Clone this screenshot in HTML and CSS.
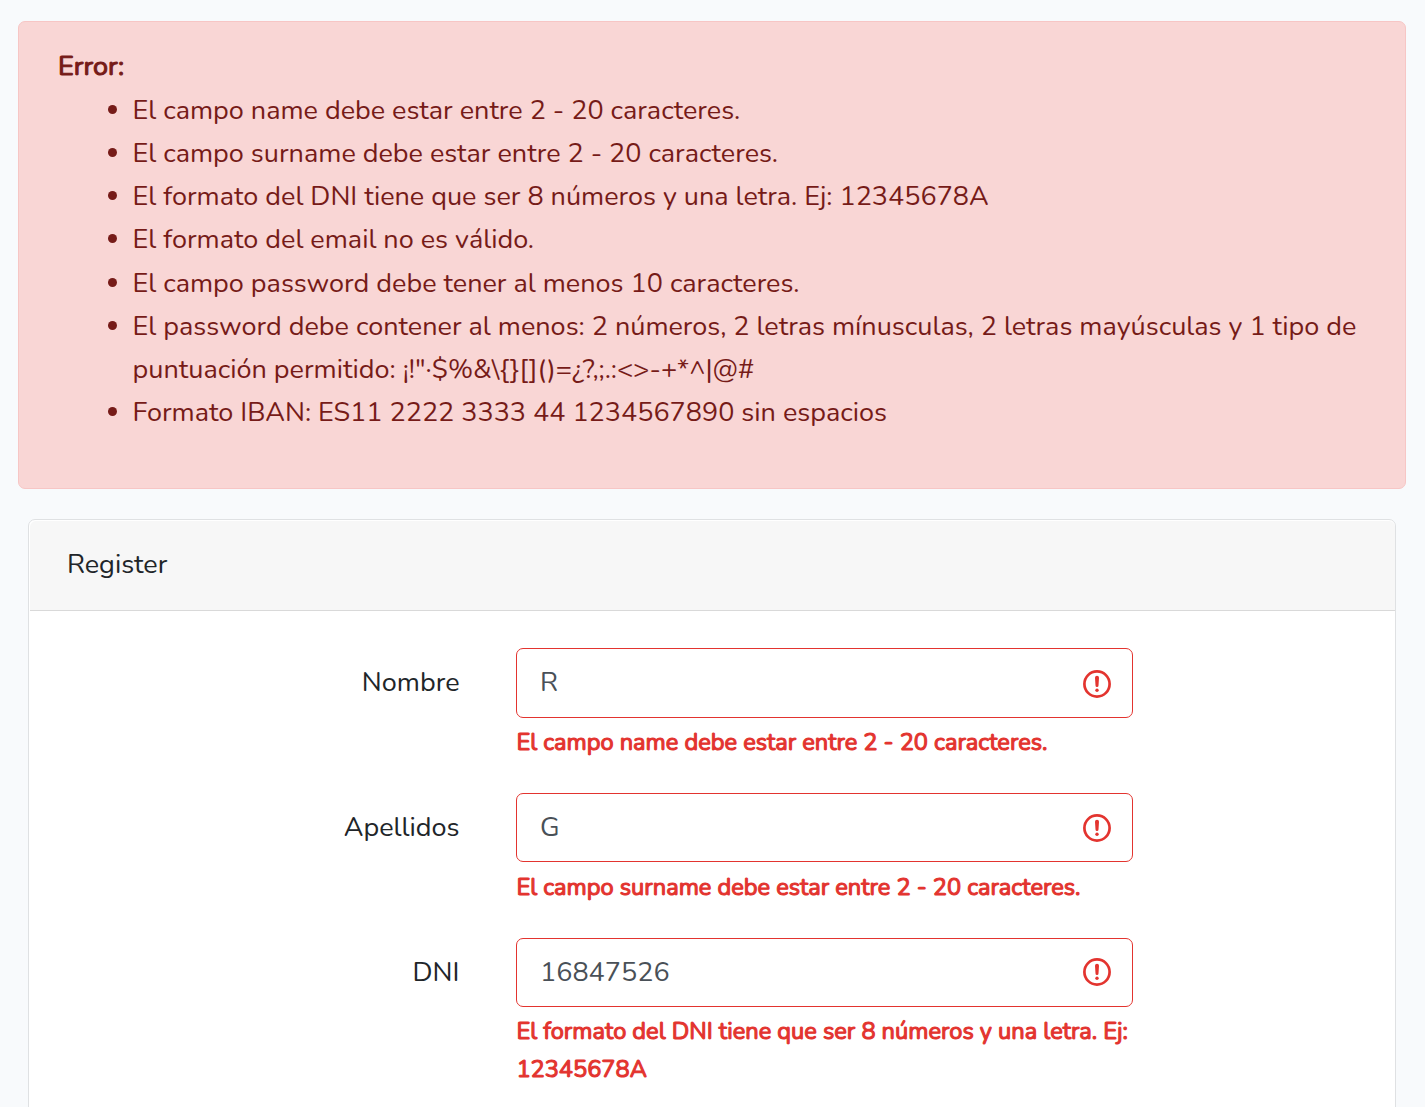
FILE: index.html
```html
<!DOCTYPE html>
<html lang="es">
<head>
<meta charset="utf-8">
<title>Register</title>
<link rel="stylesheet" href="styles.css">
</head>
<body>
<main class="page">
  <section class="alert" role="alert">
    <strong class="alert-title">Error:</strong>
    <ul class="alert-list">
      <li>El campo name debe estar entre 2 - 20 caracteres.</li>
      <li>El campo surname debe estar entre 2 - 20 caracteres.</li>
      <li>El formato del DNI tiene que ser 8 números y una letra. Ej: 12345678A</li>
      <li>El formato del email no es válido.</li>
      <li>El campo password debe tener al menos 10 caracteres.</li>
      <li>El password debe contener al menos: 2 números, 2 letras mínusculas, 2 letras mayúsculas y 1 tipo de puntuación permitido: ¡!"·$%&amp;\{}[]()=¿?,;.:&lt;&gt;-+*^|@#</li>
      <li>Formato IBAN: ES11 2222 3333 44 1234567890 sin espacios</li>
    </ul>
  </section>
  <section class="card">
    <header class="card-header">Register</header>
    <form class="card-body">
      <div class="row">
        <label class="label" for="name">Nombre</label>
        <div class="field">
          <div class="control">
            <input class="input" id="name" type="text" value="R">
            <svg class="icon" viewBox="0 0 28 28"><circle cx="14" cy="14" r="12.6"/><path d="M12 7.8a2 2 0 0 1 4 0l-.5 7.6a1.5 1.5 0 0 1-3 0z"/><circle class="dot" cx="14" cy="20.2" r="1.7"/></svg>
          </div>
          <strong class="feedback">El campo name debe estar entre 2 - 20 caracteres.</strong>
        </div>
      </div>
      <div class="row">
        <label class="label" for="surname">Apellidos</label>
        <div class="field">
          <div class="control">
            <input class="input" id="surname" type="text" value="G">
            <svg class="icon" viewBox="0 0 28 28"><circle cx="14" cy="14" r="12.6"/><path d="M12 7.8a2 2 0 0 1 4 0l-.5 7.6a1.5 1.5 0 0 1-3 0z"/><circle class="dot" cx="14" cy="20.2" r="1.7"/></svg>
          </div>
          <strong class="feedback">El campo surname debe estar entre 2 - 20 caracteres.</strong>
        </div>
      </div>
      <div class="row">
        <label class="label" for="dni">DNI</label>
        <div class="field">
          <div class="control">
            <input class="input" id="dni" type="text" value="16847526">
            <svg class="icon" viewBox="0 0 28 28"><circle cx="14" cy="14" r="12.6"/><path d="M12 7.8a2 2 0 0 1 4 0l-.5 7.6a1.5 1.5 0 0 1-3 0z"/><circle class="dot" cx="14" cy="20.2" r="1.7"/></svg>
          </div>
          <strong class="feedback">El formato del DNI tiene que ser 8 números y una letra. Ej: 12345678A</strong>
        </div>
      </div>
    </form>
  </section>
</main>
</body>
</html>
```
FILE: styles.css
```css
* { box-sizing: border-box; }
body {
  margin: 0;
  background: #f8fafc;
  color: #212529;
  font: 27px/43.2px Nunito, Lato, sans-serif;
}
.page {
  height: 1107px;
  overflow: hidden;
  padding: 21px 19px 0 18px;
}
.alert {
  height: 468px;
  padding: 23px 39px 0;
  border: 1px solid #f7c6c5;
  border-radius: 7px;
  background: #f9d6d5;
  color: #761b18;
}
.alert-title,
.feedback {
  display: block;
  font-weight: 400;
  -webkit-text-stroke: 1.1px currentColor;
}
.alert-list { margin: 0.6px 0 0; padding: 0 0 0 74.6px; }
.card {
  height: 700px;
  margin: 30px 10px 0;
  padding: 1px 0 0 1px;
  border: 1px solid #dfe1e3;
  border-radius: 7px;
  background: #fff;
}
.card-header {
  height: 90px;
  padding: 22px 37px 0;
  border-bottom: 1px solid #d9d9d9;
  border-radius: 6px 6px 0 0;
  background: #f7f7f7;
}
.card-body { padding: 37px 0 0; }
.row {
  display: grid;
  grid-template-columns: 429.5px 617px;
  column-gap: 56.5px;
  margin-bottom: 32px;
}
.label { padding-top: 13px; text-align: right; }
.control { position: relative; height: 70px; }
.input {
  width: 100%;
  height: 100%;
  padding: 0 60px 2px 23px;
  border: 1px solid #e3342f;
  border-radius: 7px;
  outline: 0;
  background: #fff;
  color: #495057;
  font: inherit;
}
.icon {
  position: absolute;
  top: 22px;
  right: 21.8px;
  width: 28px;
  height: 28px;
  fill: none;
  stroke: #e3342f;
  stroke-width: 2.7;
}
.icon path, .icon .dot { fill: #e3342f; stroke: none; }
.feedback {
  margin-top: 5px;
  padding-left: 0.4px;
  color: #e3342f;
  font-size: 23.6px;
  line-height: 38px;
}
.row + .row .control { height: 69px; }
.row + .row .field { padding-bottom: 1px; }
.row + .row .input { padding-bottom: 0; }
.row + .row .icon { top: 20.5px; }
.row:nth-child(2) .feedback { margin-top: 6px; margin-bottom: -1px; }
.row:nth-child(3) .icon { top: 20px; }
```
